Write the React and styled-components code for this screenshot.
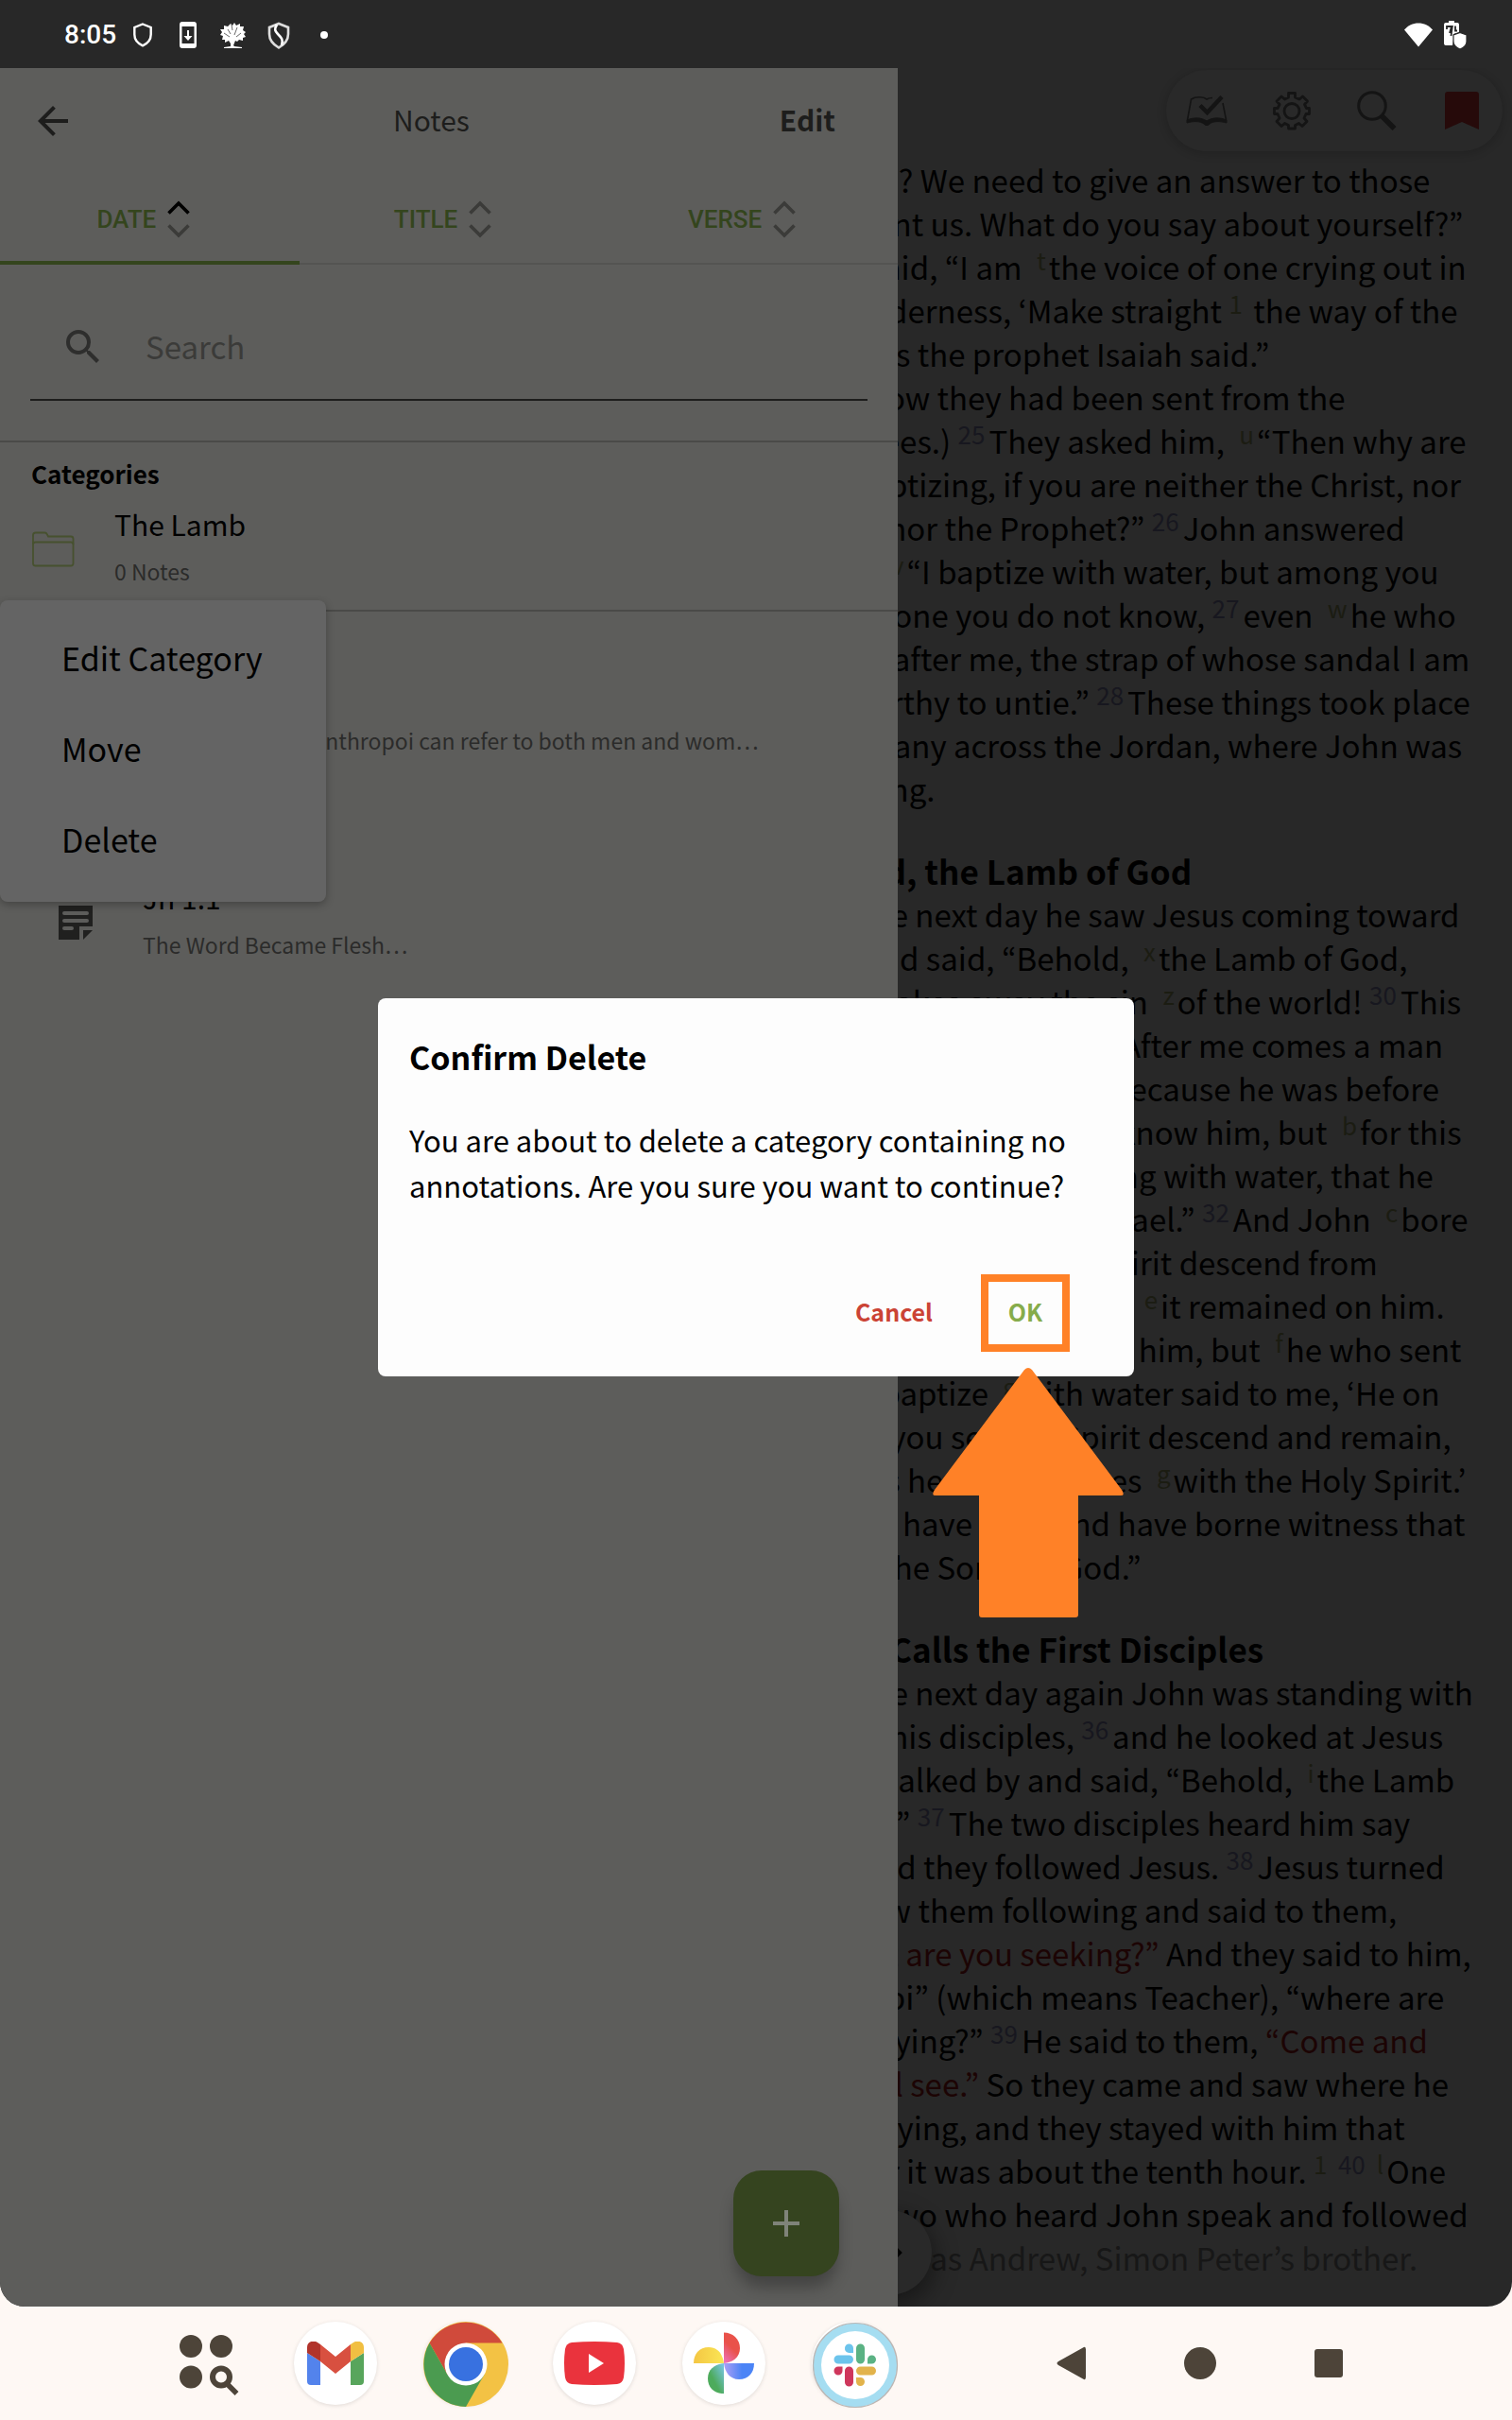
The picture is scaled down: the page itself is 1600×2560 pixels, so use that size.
import React from "react";
import styled, { createGlobalStyle } from "styled-components";
import { MdArrowBack, MdSearch } from "react-icons/md";

const color = {
  backdrop: "#282828",
  drawer: "#5d5d5b",
  menu: "#646464",
  green: "#34451d",
  dark: "#1d1d1c",
  icon: "#2e2e2d",
  muted: "#3b3b39",
  line: "#4a4a48",
  cream: "#fef8f4",
  nav: "#4d4439",
  orange: "#ff8127",
};

const GlobalStyle = createGlobalStyle`
  *, *::before, *::after { box-sizing: border-box; }
  body { margin: 0; background: ${color.cream}; }
  body, button, input { font-family: "Noto Sans CJK KR", "Noto Sans", sans-serif; }
  h1, h2, h3, p, ul { margin: 0; padding: 0; }
  ul { list-style: none; }
  button { border: 0; padding: 0; background: none; color: inherit; cursor: pointer; }
  svg { display: block; flex: none; }
`;

const Page = styled.div`
  display: flex;
  flex-direction: column;
  min-height: 100vh;
  overflow: hidden;
`;

const Screen = styled.div`
  flex: 1;
  display: flex;
  flex-direction: column;
  background: ${color.backdrop};
  border-radius: 0 0 26px 26px;
  overflow: hidden;
`;

const StatusBar = styled.header`
  display: flex;
  align-items: center;
  justify-content: space-between;
  height: 72px;
  padding: 2px 48px 0 68px;
  color: #fff;
`;

const StatusGroup = styled.div`
  display: flex;
  align-items: center;
  gap: ${(p) => p.$gap}px;
`;

const StatusIcon = styled.span`
  display: grid;
  place-items: center;
  width: 28px;
`;

const Clock = styled.time`
  font: 500 28px/32px Roboto, sans-serif;
`;

const Body = styled.div`
  flex: 1;
  display: grid;
  grid-template-columns: 19fr 13fr;
`;

/* Reader */

const Reader = styled.main`
  grid-area: 1 / 1 / 2 / 3;
  position: relative;
  min-width: 0;
  overflow: hidden;
  padding: 95px 0 0 calc(52% + 5px);
  color: #000;
`;

const Toolbar = styled.nav`
  position: absolute;
  top: 2px;
  right: 10px;
  display: flex;
  align-items: center;
  gap: 44px;
  height: 86px;
  padding: 0 20px;
  border-radius: 43px;
  background: #292929;
  box-shadow: 0 2px 8px 2px rgba(0, 0, 0, 0.14);
  color: #141414;
`;

const ToolButton = styled.button`
  display: grid;
  place-items: center;
  width: 46px;
  height: 48px;
  color: ${(p) => (p.$marked ? "#260a0a" : "inherit")};
`;

const Passage = styled.section`
  & + & {
    margin-top: 40px;
  }
`;

const PassageTitle = styled.h2`
  font-size: 35px;
  line-height: 47px;
  font-weight: 700;
  white-space: nowrap;
`;

const Line = styled.span`
  display: block;
  font-size: 33px;
  line-height: 46px;
  white-space: pre;
  padding-left: ${(p) => (p.$indent ? 33 : 0)}px;
  color: ${(p) => (p.$faded ? "#171717" : "inherit")};
`;

const Mark = styled.sup`
  font-size: 26px;
  line-height: 0;
  vertical-align: 10px;
`;

const VerseMark = styled(Mark)`
  color: #17171f;
  margin-right: 4px;
`;

const CrossMark = styled(Mark)`
  color: #1b1c12;
  margin: 0 3px 0 8px;
`;

const FootMark = styled(Mark)`
  color: #1b1c12;
  margin-right: 4px;
`;

const Red = styled.span`
  color: #1c0404;
`;

const PageButton = styled.button`
  position: absolute;
  left: 56%;
  bottom: 12px;
  display: grid;
  place-items: center;
  width: 90px;
  height: 90px;
  border-radius: 50%;
  background: #292929;
  box-shadow: 0 8px 24px 4px rgba(0, 0, 0, 0.4);
`;

/* Drawer */

const Drawer = styled.aside`
  grid-area: 1 / 1 / 2 / 2;
  position: relative;
  min-width: 0;
  background: ${color.drawer};
  color: #000;
`;

const DrawerHeader = styled.div`
  display: flex;
  align-items: center;
  gap: 20px;
  height: 112px;
  padding: 0 66px 0 32px;
  color: ${color.dark};
`;

const DrawerTitle = styled.h1`
  flex: 1;
  padding: 0 0 4px 8px;
  text-align: center;
  font-size: 30px;
  line-height: 40px;
  font-weight: 400;
`;

const EditButton = styled.button`
  padding-bottom: 4px;
  font-size: 30px;
  line-height: 40px;
  font-weight: 700;
`;

const Tabs = styled.div`
  display: flex;
  height: 96px;
  border-bottom: 2px solid #545452;
`;

const Tab = styled.button`
  flex: 1;
  display: flex;
  align-items: center;
  justify-content: center;
  gap: 12px;
  padding: 4px 13px 0 0;
  margin-bottom: -2px;
  border-bottom: 4px solid ${(p) => (p.$active ? color.green : "transparent")};
  color: ${color.green};
  font: 500 26px/32px Roboto, sans-serif;
`;

const SearchField = styled.label`
  display: flex;
  align-items: center;
  gap: 42px;
  height: 112px;
  margin: 32px 32px 42px;
  padding: 0 32px;
  border-bottom: 2px solid ${color.dark};
  color: ${color.icon};
`;

const SearchInput = styled.input.attrs({ type: "search" })`
  flex: 1;
  min-width: 0;
  border: 0;
  padding: 0 0 2px;
  outline: 0;
  background: transparent;
  font-size: 33px;
  line-height: 48px;
  color: ${color.dark};
  &::placeholder {
    color: ${color.muted};
    opacity: 1;
  }
`;

const Section = styled.section`
  padding-top: 12px;
  padding-bottom: ${(p) => (p.$ruled ? 16 : 0)}px;
  border-top: 2px solid ${color.line};
`;

const SectionTitle = styled.h2`
  padding: 1px 33px 0;
  font-size: 26px;
  line-height: 40px;
  font-weight: 700;
`;

const Row = styled.li`
  position: relative;
  display: flex;
  align-items: center;
  gap: ${(p) => (p.$nested ? 47 : 41)}px;
  padding: 7px 32px 5px ${(p) => (p.$nested ? 56 : 32)}px;
`;

const RowIcon = styled.span`
  margin-top: 10px;
`;

const RowTitle = styled.h3`
  font-size: 30px;
  line-height: 52px;
  font-weight: 400;
`;

const RowText = styled.p`
  margin-top: 4px;
  font-size: 23px;
  line-height: 40px;
  color: #2b2b2a;
  white-space: nowrap;
`;

const Menu = styled.ul`
  position: absolute;
  z-index: 1;
  top: calc(100% + 6px);
  left: 0;
  padding: 13px 0 18px;
  border-radius: 8px;
  background: ${color.menu};
  box-shadow: 0 3px 8px rgba(0, 0, 0, 0.28);
`;

const MenuItem = styled.button`
  display: block;
  width: 100%;
  padding: 0 67px 0 65px;
  text-align: left;
  font-size: 34px;
  line-height: 96px;
`;

const AddButton = styled.button`
  position: absolute;
  right: 62px;
  bottom: 32px;
  display: grid;
  place-items: center;
  width: 112px;
  height: 112px;
  border-radius: 30px;
  background: #35441f;
  box-shadow: 0 14px 16px -2px rgba(0, 0, 0, 0.28);
`;

/* Dialog */

const DialogLayer = styled.div`
  grid-area: 1 / 1 / 2 / 3;
  z-index: 2;
  display: grid;
  place-items: center;
`;

const Dialog = styled.div`
  width: 50%;
  padding: 38px 68px 26px 33px;
  border-radius: 8px;
  background: #fdfdfd;
  color: #000;
`;

const DialogTitle = styled.h2`
  font-size: 34px;
  line-height: 48px;
  font-weight: 700;
`;

const DialogText = styled.p`
  margin: 40px 0 70px;
  font-size: 31px;
  line-height: 48px;
  white-space: pre-line;
`;

const DialogActions = styled.div`
  display: flex;
  align-items: center;
  justify-content: flex-end;
  gap: 51px;
`;

const DialogButton = styled.button`
  padding-bottom: 4px;
  font-size: 25px;
  line-height: 40px;
  font-weight: 700;
  color: ${(p) => (p.$danger ? "#cb4335" : "#86ac4b")};
`;

const Highlight = styled.span`
  position: relative;
  display: grid;
  place-items: center;
  width: 94px;
  height: 82px;
  border: 8px solid ${color.orange};
`;

const Pointer = styled.svg`
  position: absolute;
  top: 91px;
  left: -59px;
`;

/* Bottom bar */

const BottomBar = styled.footer`
  display: flex;
  align-items: center;
  justify-content: space-between;
  height: 120px;
  padding: 0 150px 0 174px;
  color: ${color.nav};
`;

const BarGroup = styled.div`
  display: flex;
  gap: ${(p) => p.$gap}px;
`;

const AppButton = styled.button`
  display: grid;
  place-items: center;
  width: 88px;
  height: 88px;
  border-radius: 50%;
  background: ${(p) => (p.$disc ? "#fff" : "transparent")};
  box-shadow: ${(p) => (p.$disc ? "0 1px 4px rgba(0, 0, 0, 0.12)" : "none")};
`;

/* Icons */

const Chevrons = ({ up }) => (
  <svg width="24" height="40" viewBox="0 0 24 40" fill="none" strokeWidth="3.6">
    <path d="M1.5 13.5 12 3 22.5 13.5" stroke={up ? "#000" : color.muted} />
    <path d="M1.5 26.5 12 37 22.5 26.5" stroke={color.muted} />
  </svg>
);

const ShieldIcon = () => (
  <svg width="20" height="26" viewBox="0 0 20 26" fill="none" stroke="#fff" strokeWidth="2.4">
    <path d="M10 1.5 18.7 5v7.5c0 5-3.6 9.5-8.7 11.8C4.9 22 1.3 17.500 1.3 12.5V5z" />
  </svg>
);

const UpdateIcon = () => (
  <svg width="20" height="28" viewBox="0 0 20 28">
    <path fill="#fff" fillRule="evenodd" d="M4 0h12q3 0 3 3v22q0 3-3 3H4q-3 0-3-3V3q0-3 3-3zM3.500 5v18h13V5zM9 9h2v6h3.500L10 20l-4.500-5H9z" />
  </svg>
);

const TreeIcon = () => (
  <svg width="28" height="28" viewBox="0 0 28 28" fill="#fff">
    <path d="M11 2l2 2 2-3 2 3 4-2 0 3 4 0-1 4 3 2-2 2 2 3-3 1 0 3-4-1-2 2-2-1-2 5 1 1 8 1v1H4v-1l7-1 0-3-2-3-4 2 0-3-3 0 1-4-3-1 2-3-2-3 4 0 0-4 4 1z" />
    <path d="M8 8l3 5M18 6l-3 8M22 12l-5 4M4 12l6 4M12 3l1 6" stroke={color.backdrop} strokeWidth="0.7" />
  </svg>
);

const SplitShieldIcon = () => (
  <svg width="24" height="29" viewBox="0 0 24 29" fill="none" stroke="#fff" strokeWidth="2.6">
    <path d="M12 2 22 6v7c0 6-4 11-10 14.5C6 24 2 19 2 13V6z" stroke="#ddd" />
    <path d="M10 3C7 8 8 10 11 13c4 4 6 6 4 12" />
  </svg>
);

const DotIcon = () => (
  <svg width="8" height="8" viewBox="0 0 8 8" fill="#fff"><circle cx="4" cy="4" r="4" /></svg>
);

const WifiIcon = () => (
  <svg width="30" height="26" viewBox="0 0 30 26" fill="#fff">
    <path d="M15 25.5 0 7.500C4 3 9 .5 15 .5s11 2.500 15 7z" />
  </svg>
);

const BatteryIcon = () => (
  <svg width="24" height="30" viewBox="0 0 24 30">
    <path fill="#fff" d="M5 0h6v2h3q2 0 2 2v8l-6 2v6l-1 6H2q-2 0-2-2V4q0-2 2-2h3z" />
    <path fill="none" stroke={color.backdrop} strokeWidth="1.8" d="M3 9V6h5l-2 7M12 5.5v5h2M9 5 7.5 16" />
    <path fill="#fff" stroke={color.backdrop} strokeWidth="1.2" d="M17 12.5l7 2.500v7c0 4-3 6.500-7 8-4-1.500-7-4-7-8v-7z" />
  </svg>
);

const BookCheckIcon = () => (
  <svg width="44" height="36" viewBox="0 0 44 36" fill="none" stroke="currentColor">
    <path strokeWidth="1.6" d="M28 4.5c-2.500 0-4.500.5-6 1.500C18 3 10 3 5.500 6L1.500 28M39 10l3.500 18" />
    <path fill="currentColor" strokeWidth="1" d="M1 28c7-3 15-3 21 1 6-4 14-4 21-1v3c-7-2-14-2-18 1-1 2-5 2-6 0-4-3-11-3-18-1z" />
    <path strokeWidth="4.5" d="M15 12.5l7.500 7.500L38 3.500" />
  </svg>
);

const GearIcon = () => (
  <svg width="42" height="42" viewBox="0 0 42 42" fill="none" stroke="currentColor" strokeWidth="2.8" strokeLinejoin="round">
    <path d="M17.500 2.500h7v4.500l4.500 2 3.500-3 5 5-3 3.500 2 4H39.500v6H36l-2 4.500 3 3.500-5 5-3.500-3-4 2v3.500h-7v-3.500l-4-2-3.500 3-5-5 3-3.500-2-4.500H2.500v-6H6l2-4-3-3.500 5-5 3.500 3 4-2z" />
    <circle cx="21" cy="21.5" r="8" />
  </svg>
);

const LensIcon = () => (
  <svg width="42" height="42" viewBox="0 0 42 42" fill="none" stroke="currentColor">
    <circle cx="16" cy="16" r="14.3" strokeWidth="3" />
    <path strokeWidth="5.5" d="M26 26.5 39.500 40" />
  </svg>
);

const BookmarkIcon = () => (
  <svg width="36" height="40" viewBox="0 0 36 40" fill="currentColor">
    <path d="M3 0h30q3 0 3 3v37L18 32 0 40V3q0-3 3-3z" />
  </svg>
);

const FolderIcon = () => (
  <svg width="48" height="38" viewBox="0 0 48 38" fill="none" stroke="#47512f" strokeWidth="1.8">
    <path d="M3 34V4q0-2.500 2.500-2.500h10q1.500 0 2.500 2l1 2h24q2.500 0 2.500 2.500v26q0 2.500-2.500 2.500h-37.500Q3 36.500 3 34z" />
    <path d="M3 14q0-2.500 2.500-2.500h37.500q2.500 0 2.500 2.500" />
  </svg>
);

const NoteIcon = () => (
  <svg width="48" height="36" viewBox="0 0 48 36">
    <path fill="#20201f" d="M6 0h36v22H28v14H6z" />
    <path fill="#20201f" d="M32 26h10L32 36z" />
    <path stroke={color.drawer} strokeWidth="4" strokeLinecap="round" d="M12 8h24M12 16h24M12 24h8" />
  </svg>
);

const PlusIcon = () => (
  <svg width="28" height="28" viewBox="0 0 28 28" stroke="#7f8379" strokeWidth="4">
    <path d="M14 0v28M0 14h28" />
  </svg>
);

const AppsIcon = () => (
  <svg width="88" height="88" viewBox="0 0 88 88" fill="currentColor">
    <circle cx="28" cy="26" r="12" />
    <circle cx="60" cy="26" r="12" />
    <circle cx="28" cy="58.5" r="12" />
    <circle cx="60" cy="58.5" r="9" fill="none" stroke="currentColor" strokeWidth="6" />
    <path d="M66 65.5l10.500 10.500" stroke="currentColor" strokeWidth="5.5" />
  </svg>
);

const GmailIcon = () => (
  <svg width="60" height="46" viewBox="0 0 60 46">
    <path fill="#5383ec" d="M0 12l14 9v25H4q-4 0-4-4z" />
    <path fill="#58a55c" d="M60 12l-14 9v25h10q4 0 4-4z" />
    <path fill="#d85040" d="M14 3l16 13L46 3v18L30 34 14 21z" />
    <path fill="#b1342b" d="M14 21 0 12V6C0 0 7-2 11 1l3 2z" />
    <path fill="#f1bf42" d="M46 21l14-9V6c0-6-7-8-11-5l-3 2z" />
  </svg>
);

const ChromeIcon = () => (
  <svg width="90" height="90" viewBox="-45 -45 90 90">
    <circle r="45" fill="#f3c244" />
    <path fill="#d04a3b" d="M-38.500-22.500A45 45 0 0 1 38.500-22.500H0L-19.500 11z" />
    <path fill="#4b9b50" d="M-38.500-22.500-19.500 11 19.500 11 0 45A45 45 0 0 1-38.500-22.500z" />
    <circle r="22.5" fill="#fff" />
    <circle r="18" fill="#3871e0" />
  </svg>
);

const YouTubeIcon = () => (
  <svg width="64" height="46" viewBox="0 0 64 46">
    <path fill="#ea333d" d="M8 1Q32-1 56 1q6 1 7 7 2 15 0 30-1 6-7 7-24 2-48 0-6-1-7-7-2-15 0-30 1-6 7-7z" />
    <path fill="#fff" d="M26 13l16 10-16 10z" />
  </svg>
);

const PhotosIcon = () => (
  <svg width="66" height="66" viewBox="-33 -33 66 66">
    <defs>
      <linearGradient id="petalRed" x1="0" y1="1" x2="0.3" y2="0.4"><stop stopColor="#ee74c4" /><stop offset="1" stopColor="#e9524a" /></linearGradient>
      <linearGradient id="petalBlue"><stop stopColor="#ad9ff5" /><stop offset="0.6" stopColor="#4b84f6" /></linearGradient>
      <linearGradient id="petalGreen" x1="1" y1="0" x2="0.4" y2="0.6"><stop stopColor="#7cc7ee" /><stop offset="1" stopColor="#4dab5c" /></linearGradient>
      <linearGradient id="petalYellow"><stop stopColor="#f4c643" /><stop offset="1" stopColor="#fae655" /></linearGradient>
    </defs>
    <path fill="url(#petalRed)" d="M0 0v-32.500C9-32.500 17-26 17-16S9-1 0 0z" />
    <path fill="url(#petalBlue)" d="M0 0h32C32 10 26 17 16 17S1 9 0 0z" />
    <path fill="url(#petalGreen)" d="M0 0v32C-10 32-17 26-17 16S-9 1 0 0z" />
    <path fill="url(#petalYellow)" d="M0 0h-32C-32-10-26-17-16-17S-1-9 0 0z" />
  </svg>
);

const SlackIcon = () => (
  <svg width="92" height="92" viewBox="-46 -46 92 92">
    <circle r="44.5" fill="#a5ddf1" stroke="#bcb6b3" strokeWidth="1.2" />
    <circle r="36" fill="#fff" />
    <path fill="#6cc4ec" d="M-2-13v-5a4.500 4.500 0 0 0-9 0 4.500 4.500 0 0 0 4.500 5zM-18-10.500h11.500a4.500 4.500 0 0 1 0 9h-11.500a4.500 4.500 0 0 1 0-9z" />
    <path fill="#5bb284" d="M1-18a4.500 4.500 0 0 1 9 0v12a4.500 4.500 0 0 1-9 0zM13-1.500V-6a4.500 4.500 0 1 1 4.500 4.500z" />
    <path fill="#e2b34b" d="M5.500 1.500h12a4.500 4.500 0 0 1 0 9h-12a4.500 4.500 0 0 1 0-9zM1 13h4.500A4.500 4.500 0 1 1 1 17.500z" />
    <path fill="#cf375c" d="M-11 6a4.500 4.500 0 0 1 9 0v12a4.500 4.500 0 0 1-9 0zM-13.500 1.500V6A4.500 4.500 0 1 1-18 1.500z" />
  </svg>
);

const statusIcons = [ShieldIcon, UpdateIcon, TreeIcon, SplitShieldIcon, DotIcon];

const V = ({ children }) => <VerseMark>{children}</VerseMark>;
const C = ({ children }) => <CrossMark>{children}</CrossMark>;

const passages = [
  {
    indents: [5],
    lines: [
      <>are you? We need to give an answer to those</>,
      <>who sent us. What do you say about yourself?”</>,
      <><V>23</V>He said, “I am <C>t</C>the voice of one crying out in</>,
      <>the wilderness, ‘Make straight <FootMark>1</FootMark> the way of the</>,
      <>Lord,’ as the prophet Isaiah said.”</>,
      <><V>24</V>(Now they had been sent from the</>,
      <>Pharisees.) <V>25</V>They asked him, <C>u</C>“Then why are</>,
      <>you baptizing, if you are neither the Christ, nor</>,
      <>Elijah, nor the Prophet?” <V>26</V>John answered</>,
      <>them, <C>v</C>“I baptize with water, but among you</>,
      <>stands one you do not know, <V>27</V>even <C>w</C>he who</>,
      <>comes after me, the strap of whose sandal I am</>,
      <>not worthy to untie.” <V>28</V>These things took place</>,
      <>in Bethany across the Jordan, where John was</>,
      <>baptizing.</>,
    ],
  },
  {
    title: "Behold, the Lamb of God",
    indents: [0],
    lines: [
      <><V>29</V>The next day he saw Jesus coming toward</>,
      <>him, and said, “Behold, <C>x</C>the Lamb of God,</>,
      <>who <C>y</C>takes away the sin <C>z</C>of the world! <V>30</V>This</>,
      <>is he of whom I said, <C>a</C>‘After me comes a man</>,
      <>who ranks before me, because he was before</>,
      <>me.’ <V>31</V>I myself did not know him, but <C>b</C>for this</>,
      <>purpose I came baptizing with water, that he</>,
      <>might be revealed to Israel.” <V>32</V>And John <C>c</C>bore</>,
      <>witness: <C>d</C>“I saw the Spirit descend from</>,
      <>heaven like a dove, and <C>e</C>it remained on him.</>,
      <><V>33</V>I myself did not know him, but <C>f</C>he who sent</>,
      <>me to baptize <C>g</C>with water said to me, ‘He on</>,
      <>whom you see the Spirit descend and remain,</>,
      <><C>h</C>this is he who baptizes <C>g</C>with the Holy Spirit.’</>,
      <><V>34</V>And I have seen and have borne witness that</>,
      <>this is the Son <C>h</C>of God.”</>,
    ],
  },
  {
    title: "Jesus Calls the First Disciples",
    indents: [0],
    lines: [
      <><V>35</V>The next day again John was standing with</>,
      <>two of his disciples, <V>36</V>and he looked at Jesus</>,
      <>as he walked by and said, “Behold, <C>i</C>the Lamb</>,
      <>of God!” <V>37</V>The two disciples heard him say</>,
      <>this, and they followed Jesus. <V>38</V>Jesus turned</>,
      <>and saw them following and said to them,</>,
      <><C>j</C><Red>“What are you seeking?”</Red> And they said to him,</>,
      <><C>k</C>“Rabbi” (which means Teacher), “where are</>,
      <>you staying?” <V>39</V>He said to them, <Red>“Come and</Red></>,
      <><Red>you will see.”</Red> So they came and saw where he</>,
      <>was staying, and they stayed with him that</>,
      <>day, for it was about the tenth hour. <FootMark>1</FootMark> <V>40</V><C>l</C>One</>,
      <>of the two who heard John speak and followed</>,
      <>Jesus <C>n</C>was Andrew, Simon Peter’s brother.</>,
    ],
    fadeLast: true,
  },
];

const notes = [
  { title: "Jn 1:4", text: "The Greek word, anthropoi can refer to both men and wom…" },
  { title: "Jn 1:3", text: "All things made…" },
  { title: "Jn 1:1", text: "The Word Became Flesh…" },
];

export default function App() {
  return (
    <Page>
      <GlobalStyle />
      <Screen>
        <StatusBar>
          <StatusGroup $gap={14}>
            <Clock>8:05</Clock>
            <StatusGroup $gap={20}>
              {statusIcons.map((Icon, i) => (
                <StatusIcon key={i}><Icon /></StatusIcon>
              ))}
            </StatusGroup>
          </StatusGroup>
          <StatusGroup $gap={12}>
            <WifiIcon />
            <BatteryIcon />
          </StatusGroup>
        </StatusBar>

        <Body>
          <Reader>
            <Toolbar aria-label="Reader tools">
              <ToolButton aria-label="Reading plans"><BookCheckIcon /></ToolButton>
              <ToolButton aria-label="Settings"><GearIcon /></ToolButton>
              <ToolButton aria-label="Search text"><LensIcon /></ToolButton>
              <ToolButton aria-label="Bookmark" $marked><BookmarkIcon /></ToolButton>
            </Toolbar>
            {passages.map((p, i) => (
              <Passage key={i}>
                {p.title && <PassageTitle>{p.title}</PassageTitle>}
                <p>
                  {p.lines.map((line, n) => (
                    <Line
                      key={n}
                      $indent={p.indents.includes(n)}
                      $faded={p.fadeLast && n === p.lines.length - 1}
                    >
                      {line}
                    </Line>
                  ))}
                </p>
              </Passage>
            ))}
            <PageButton aria-label="Next chapter">
              <svg width="28" height="28" viewBox="0 0 28 28" fill="none" stroke="#000" strokeWidth="4">
                <path d="M0 14h24M14 3l11 11-11 11" />
              </svg>
            </PageButton>
          </Reader>

          <Drawer>
            <DrawerHeader>
              <button aria-label="Back"><MdArrowBack size={48} /></button>
              <DrawerTitle>Notes</DrawerTitle>
              <EditButton>Edit</EditButton>
            </DrawerHeader>
            <Tabs>
              <Tab $active>DATE<Chevrons up /></Tab>
              <Tab>TITLE<Chevrons /></Tab>
              <Tab>VERSE<Chevrons /></Tab>
            </Tabs>
            <SearchField>
              <MdSearch size={48} />
              <SearchInput placeholder="Search" aria-label="Search" />
            </SearchField>
            <Section $ruled>
              <SectionTitle>Categories</SectionTitle>
              <ul>
                <Row>
                  <RowIcon><FolderIcon /></RowIcon>
                  <div>
                    <RowTitle>The Lamb</RowTitle>
                    <RowText>0 Notes</RowText>
                  </div>
                  <Menu>
                    <li><MenuItem>Edit Category</MenuItem></li>
                    <li><MenuItem>Move</MenuItem></li>
                    <li><MenuItem>Delete</MenuItem></li>
                  </Menu>
                </Row>
              </ul>
            </Section>
            <Section>
              <SectionTitle>Notes</SectionTitle>
              <ul>
                {notes.map((n) => (
                  <Row key={n.title} $nested>
                    <RowIcon><NoteIcon /></RowIcon>
                    <div>
                      <RowTitle>{n.title}</RowTitle>
                      <RowText>{n.text}</RowText>
                    </div>
                  </Row>
                ))}
              </ul>
            </Section>
            <AddButton aria-label="Add"><PlusIcon /></AddButton>
          </Drawer>

          <DialogLayer>
            <Dialog role="dialog" aria-labelledby="confirm-title">
              <DialogTitle id="confirm-title">Confirm Delete</DialogTitle>
              <DialogText>
                {"You are about to delete a category containing no\nannotations. Are you sure you want to continue?"}
              </DialogText>
              <DialogActions>
                <DialogButton $danger>Cancel</DialogButton>
                <Highlight>
                  <DialogButton>OK</DialogButton>
                  <Pointer width="202" height="264" viewBox="0 0 202 264">
                    <path
                      fill={color.orange}
                      d="M97 2q4-4 8 0L200 129q4 6-1 6h-45v126q0 3-3 3H52q-3 0-3-3V135H3q-5 0-1-6z"
                    />
                  </Pointer>
                </Highlight>
              </DialogActions>
            </Dialog>
          </DialogLayer>
        </Body>
      </Screen>

      <BottomBar>
        <BarGroup $gap={49}>
          <AppButton aria-label="All apps"><AppsIcon /></AppButton>
          <AppButton aria-label="Gmail" $disc><GmailIcon /></AppButton>
          <AppButton aria-label="Chrome" $disc><ChromeIcon /></AppButton>
          <AppButton aria-label="YouTube" $disc><YouTubeIcon /></AppButton>
          <AppButton aria-label="Photos" $disc><PhotosIcon /></AppButton>
          <AppButton aria-label="Slack" $disc><SlackIcon /></AppButton>
        </BarGroup>
        <BarGroup $gap={48}>
          <AppButton aria-label="Back">
            <svg width="32" height="36" viewBox="0 0 32 36" fill="currentColor">
              <path d="M28 1.5q3-2 3 2v29q0 4-3 2L2 20q-3-2 0-4z" />
            </svg>
          </AppButton>
          <AppButton aria-label="Home">
            <svg width="34" height="34" viewBox="0 0 34 34" fill="currentColor"><circle cx="17" cy="17" r="17" /></svg>
          </AppButton>
          <AppButton aria-label="Recent apps">
            <svg width="30" height="30" viewBox="0 0 30 30" fill="currentColor"><rect width="30" height="30" rx="3" /></svg>
          </AppButton>
        </BarGroup>
      </BottomBar>
    </Page>
  );
}
